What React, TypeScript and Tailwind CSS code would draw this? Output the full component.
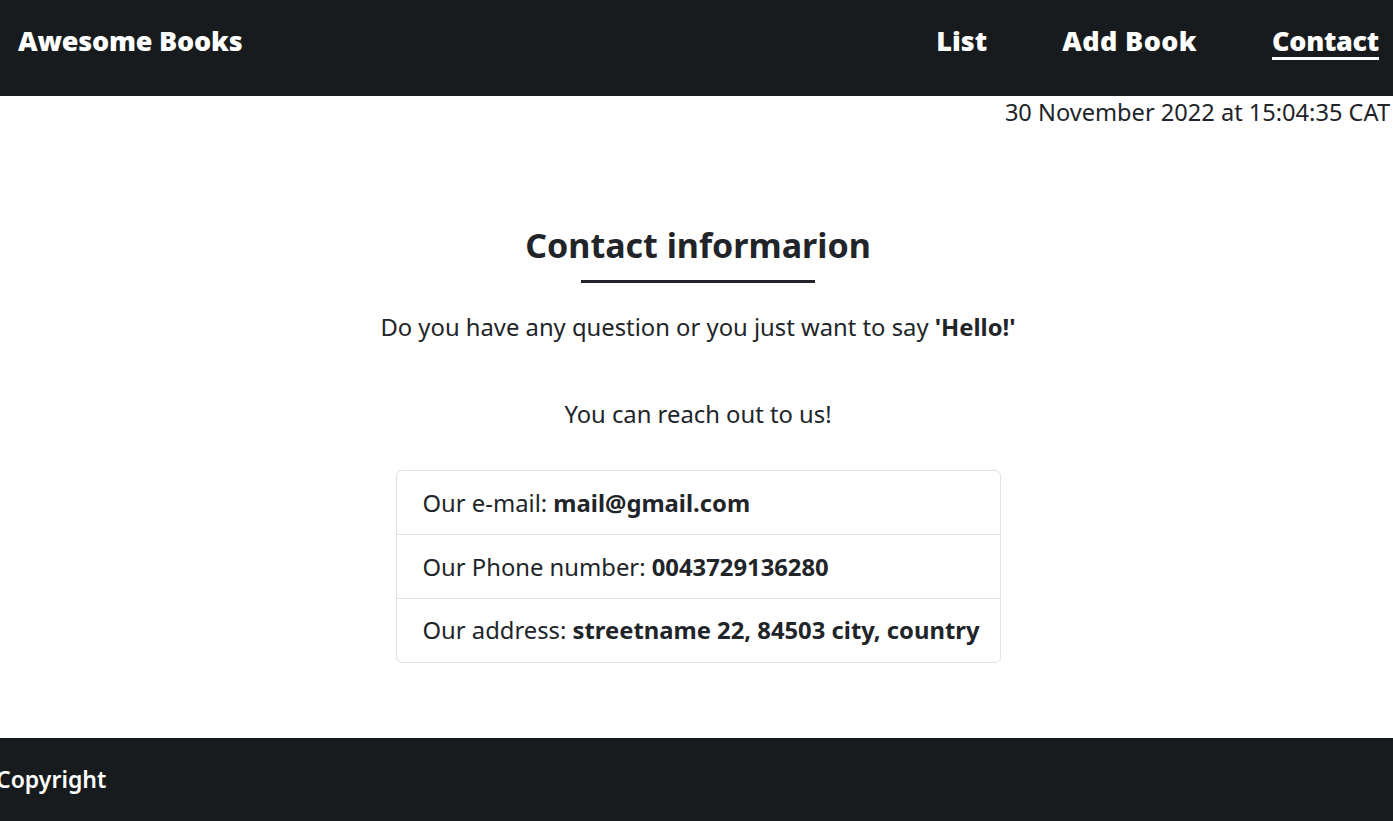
import React from "react";

export default function App() {
  return (
    <div className="min-h-[821px] flex flex-col bg-white text-[#212529]" style={{ fontFamily: '"Noto Sans", "Open Sans", sans-serif' }}>
      <header className="h-[96px] bg-[#181b1d] flex items-center justify-between pl-[18px] pr-[14px] pb-[16px] shrink-0">
        <h1 className="text-white text-[27px] font-black leading-none tracking-[-0.2px]">Awesome Books</h1>
        <nav className="flex items-center gap-[75px]">
          <a className="text-white text-[27px] font-black leading-none tracking-[0px]">List</a>
          <a className="text-white text-[27px] font-black leading-none tracking-[0.4px]">Add Book</a>
          <a className="text-white text-[27px] font-black leading-none tracking-[-0.3px] border-b-[3px] border-white pb-[3px] mt-[6px]">Contact</a>
        </nav>
      </header>
      <div className="text-right pr-[3px] text-[23.6px] leading-[32px] text-[#212529]">30 November 2022 at 15:04:35 CAT</div>
      <main className="flex-1 flex flex-col items-center pl-[3px]">
        <h2 className="mt-[97px] text-[34px] font-bold leading-[40px]">Contact informarion</h2>
        <div className="w-[234px] h-[3px] bg-[#212529] mt-[15px]" />
        <p className="mt-[28px] text-[23.8px] leading-[32px]">
          Do you have any question or you just want to say <b>'Hello!'</b>
        </p>
        <p className="mt-[55px] text-[23.8px] leading-[32px]">You can reach out to us!</p>
        <ul className="mt-[40px] w-[605px] border border-[#dee2e6] rounded-[6px] text-[23.8px] whitespace-nowrap">
          <li className="h-[64px] leading-[64px] px-[26px] border-b border-[#dee2e6]">
            Our e-mail: <b>mail@gmail.com</b>
          </li>
          <li className="h-[64px] leading-[64px] px-[26px] border-b border-[#dee2e6]">
            Our Phone number: <b>0043729136280</b>
          </li>
          <li className="h-[63px] leading-[63px] px-[26px]">
            Our address: <b>streetname 22, 84503 city, country</b>
          </li>
        </ul>
      </main>
      <footer className="h-[83px] bg-[#181b1d] flex items-center shrink-0">
        <span className="text-white text-[23px] font-semibold -ml-[4px]">Copyright</span>
      </footer>
    </div>
  );
}
